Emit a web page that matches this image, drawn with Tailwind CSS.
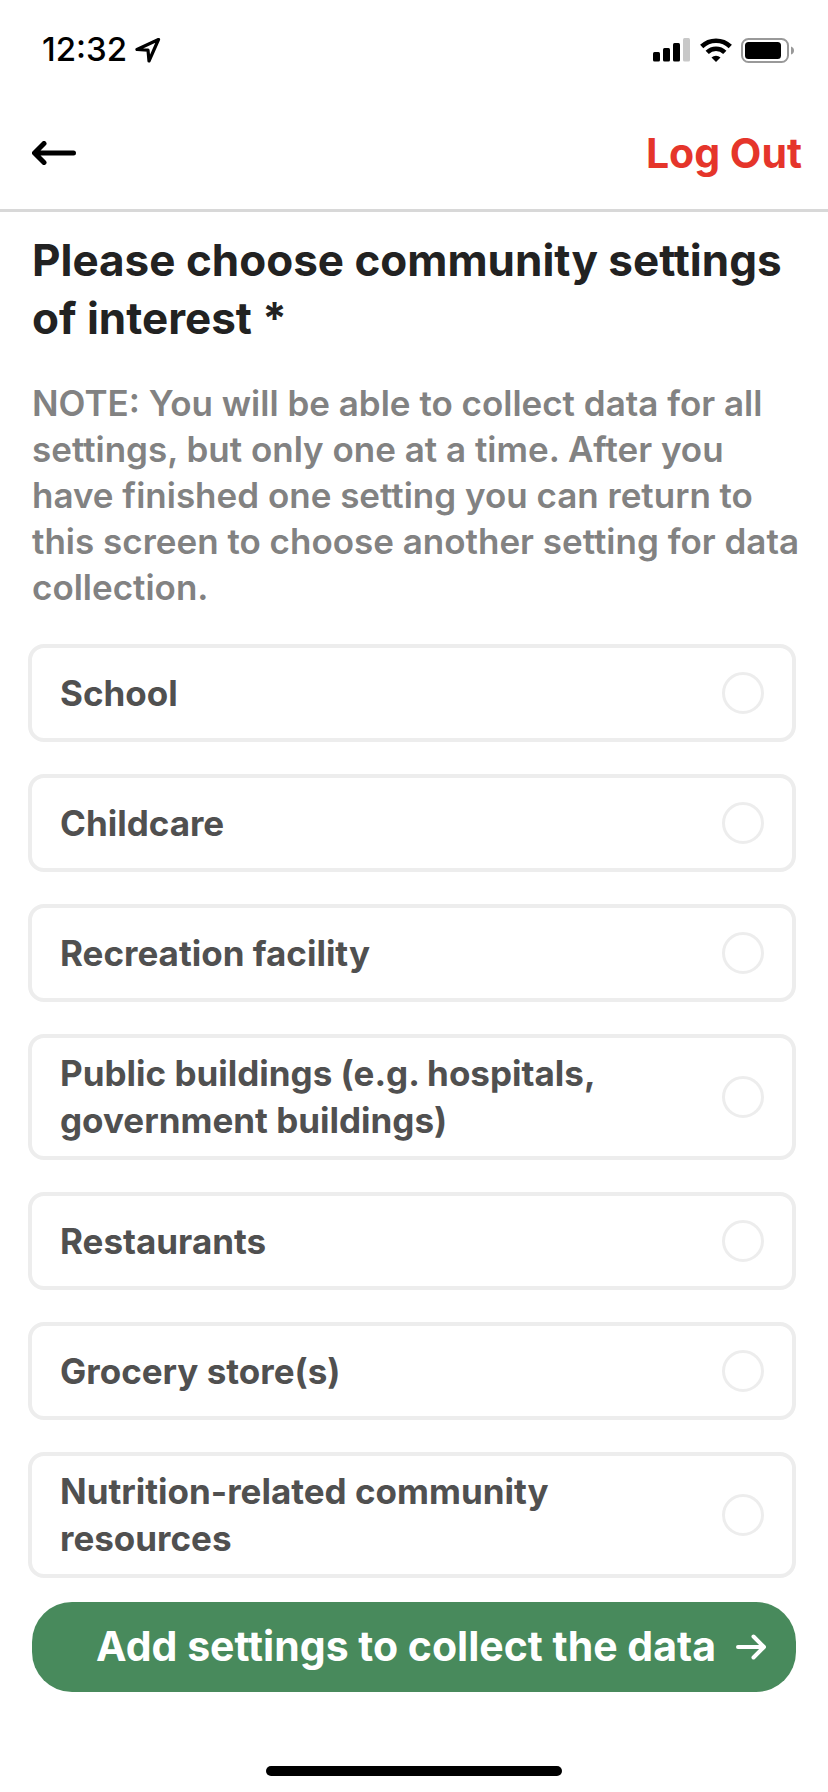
<!DOCTYPE html>
<html lang="en">
 <head>
    <meta charset="UTF-8" />
    <meta name="viewport" content="width=device-width, initial-scale=1.0" />
    <title>Community Settings</title>
    <script src="https://cdn.jsdelivr.net/npm/@tailwindcss/browser@4"></script>
 </head>
 <body class="min-h-screen flex flex-col bg-white font-['Inter',sans-serif]">
    <!-- Status Bar -->
    <div class="h-[100px] flex items-center justify-between pl-[42px] pr-[34px]">
        <div class="flex items-center gap-2">
            <span class="font-medium text-[33px] text-black">12:32</span>
            <svg class="w-[26px] h-[26px]" viewBox="0 0 26 26" fill="none" stroke="black" stroke-width="3.200" stroke-linejoin="round">
                <path d="M23.500 2.500 L2 12.500 L13 13.200 L14 24 Z" />
            </svg>
        </div>
        <div class="flex items-center gap-[9px]">
            <svg class="w-[38px] h-6" viewBox="0 0 38 24">
                <rect x="0" y="14" width="7" height="9.500" rx="1.500" />
                <rect x="10" y="10" width="7" height="13.500" rx="1.500" />
                <rect x="20" y="5" width="7" height="18.500" rx="1.500" />
                <rect x="30" y="0" width="7" height="23.500" rx="1.500" fill="#c8c8c8" />
            </svg>
            <svg class="w-8 h-6" viewBox="0 0 32 24" fill="none" stroke="black">
                <path d="M1.700 8.500 A20.500 20.500 0 0 1 30.300 8.500" stroke-width="4.600" />
                <path d="M7.200 14.300 A12.500 12.500 0 0 1 24.800 14.300" stroke-width="4.600" />
                <path d="M16 24 L11.500 19.500 A6.500 6.500 0 0 1 20.500 19.500 Z" fill="black" stroke="none" />
            </svg>
            <svg class="w-[53px] h-[25px]" viewBox="0 0 53 25">
                <rect x="1" y="1" width="46" height="23" rx="6.500" fill="none" stroke="#999" stroke-width="2" />
                <rect x="4" y="4" width="36" height="17" rx="3.500" />
                <path d="M50 8.500 Q53 9.500 53 12.500 T50 16.500 Z" fill="#999" />
            </svg>
        </div>
    </div>

    <!-- Header -->
    <header class="h-28 flex items-center justify-between pl-8 pr-[26px] pb-1 border-b-3 border-[#d8d8d8]">
        <button type="button" aria-label="Back">
            <svg class="w-11 h-6" viewBox="0 0 44 24" fill="none" stroke="black" stroke-width="5" stroke-linecap="round" stroke-linejoin="round">
                <path d="M12 2.500 L2.500 12 L12 21.500 M4 12 H41.500" />
            </svg>
        </button>
        <button type="button" class="text-[41px] leading-[50px] font-bold text-[#e5352b]">Log Out</button>
    </header>

    <!-- Settings Form -->
    <form class="flex flex-col pl-8 pr-7 pt-[19px]">
        <h1 class="text-[44px] leading-[58px] font-bold text-[#222]">Please choose community settings of interest *</h1>
        <p class="mt-[33px] text-[35px] leading-[46px] font-semibold text-[#828282]">NOTE: You will be able to collect data for all settings, but only one at a time. After you have finished one setting you can return to this screen to choose another setting for data collection.</p>

        <div id="settings" class="mt-[34px] -ml-1 mr-1 flex flex-col gap-8"></div>

        <button type="button" class="mt-6 mr-1 h-[90px] flex items-center justify-end gap-5 pr-[30px] rounded-[40px] bg-[#488a5c] text-white text-[41px] font-bold">
            Add settings to collect the data
            <svg class="w-[30px] h-[26px]" viewBox="0 0 30 26" fill="none" stroke="white" stroke-width="4" stroke-linecap="round" stroke-linejoin="round">
                <path d="M2 13 H28 M17.500 2.500 L28 13 L17.500 23.500" />
            </svg>
        </button>
    </form>

    <!-- Home Indicator -->
    <div class="mt-auto mb-4 mx-auto w-[296px] h-[10px] rounded-full bg-black"></div>

    <script>
        const settings = [
            "School",
            "Childcare",
            "Recreation facility",
            "Public buildings (e.g. hospitals, government buildings)",
            "Restaurants",
            "Grocery store(s)",
            "Nutrition-related community resources",
        ];

        //render each setting
        settings.forEach(setting => {
            document.getElementById("settings").innerHTML += `
                <label class="min-h-[98px] flex items-center justify-between px-7 py-3 border-4 border-[#ededed] rounded-2xl">
                    <span class="max-w-[580px] text-[35px] leading-[47px] font-bold text-[#505050]">${setting}</span>
                    <input type="radio" name="setting" value="${setting}"
                        class="appearance-none shrink-0 w-[42px] h-[42px] rounded-full border-3 border-[#ededed] checked:bg-[#488a5c]" />
                </label>`;
        });
    </script>
 </body>
</html>
